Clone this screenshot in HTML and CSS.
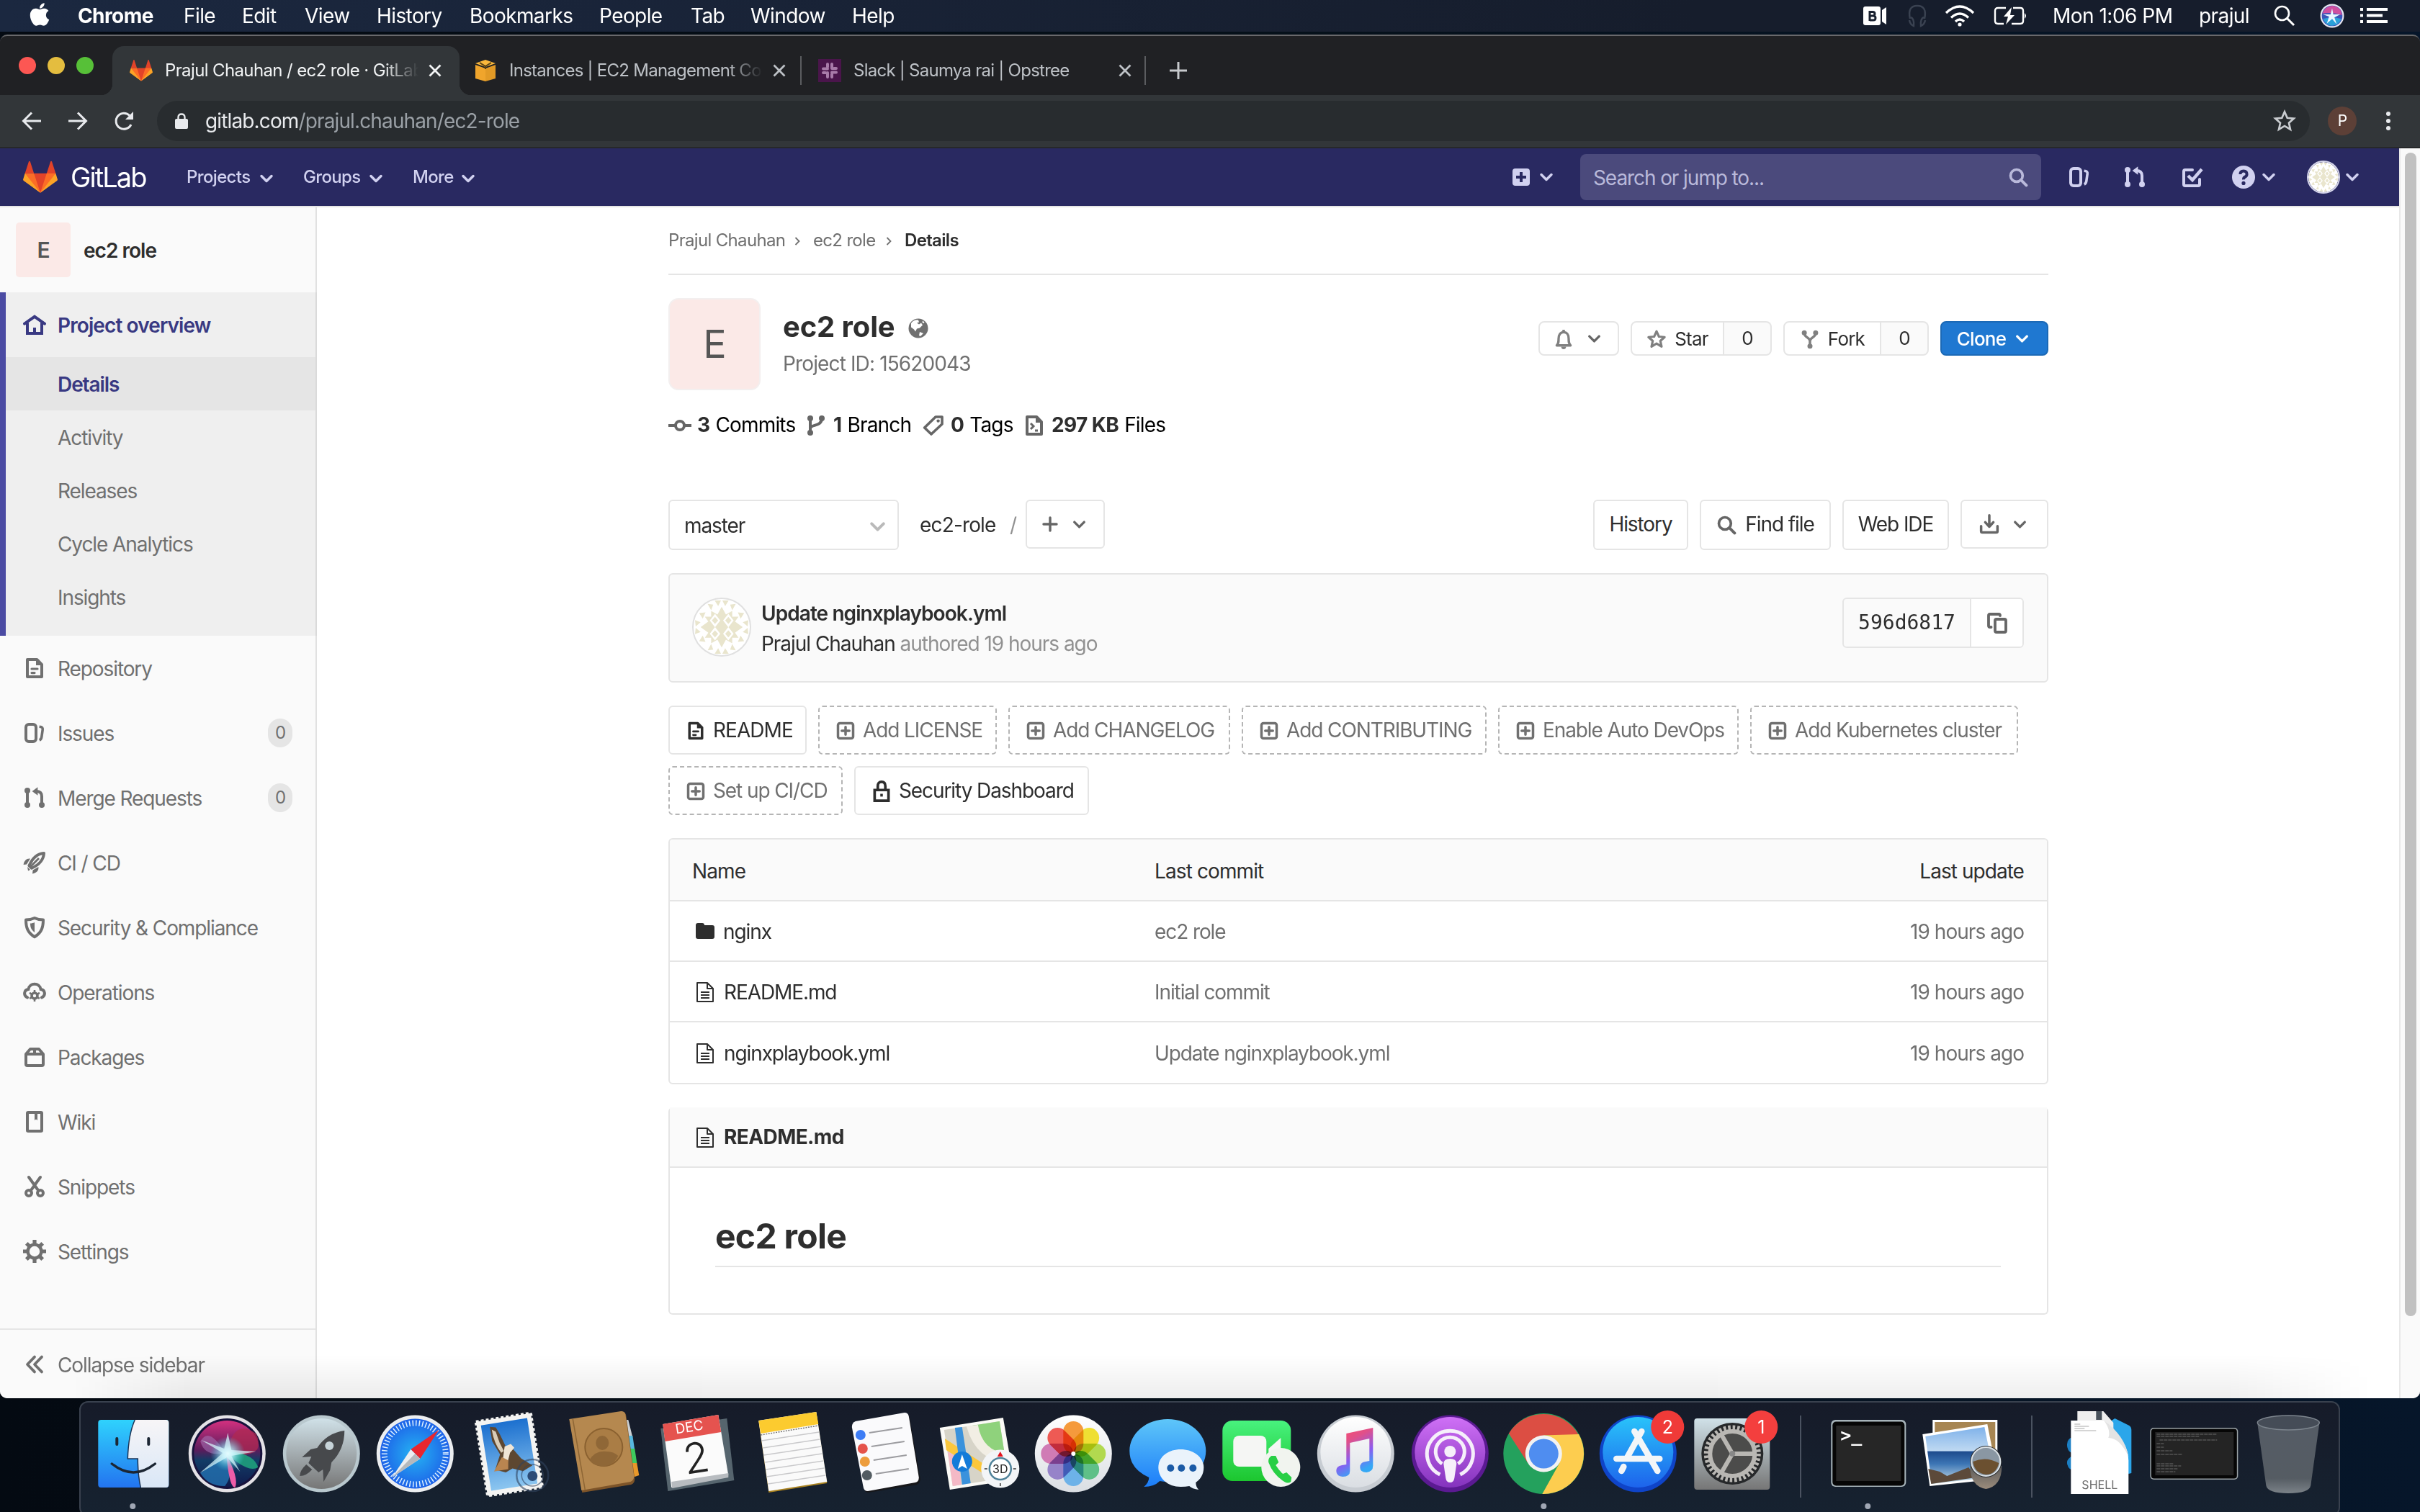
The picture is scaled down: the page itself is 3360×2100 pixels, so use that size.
FILE: index.html
```html
<!DOCTYPE html>
<html lang="en">
<head>
<meta charset="utf-8">
<title>Prajul Chauhan / ec2 role · GitLab</title>
<link rel="stylesheet" href="styles.css">
</head>
<body>
<svg class="sprite" width="0" height="0" aria-hidden="true">
  <defs>
    <linearGradient id="g-finder" x1="0" y1="0" x2="0" y2="1"><stop offset="0" stop-color="#2fd2fd"/><stop offset="1" stop-color="#2374f0"/></linearGradient>
    <linearGradient id="g-finder2" x1="0" y1="0" x2="0" y2="1"><stop offset="0" stop-color="#f7f5f7"/><stop offset="1" stop-color="#d9e7f7"/></linearGradient>
    <linearGradient id="g-siri" x1="0" y1="0" x2="0" y2="1"><stop offset="0" stop-color="#d3307f"/><stop offset=".45" stop-color="#5a1c5c"/><stop offset=".6" stop-color="#123c66"/><stop offset="1" stop-color="#101a4c"/></linearGradient>
    <radialGradient id="g-siriglow"><stop offset="0" stop-color="#fff"/><stop offset=".3" stop-color="#b9f0fa" stop-opacity=".85"/><stop offset="1" stop-color="#39c7e0" stop-opacity="0"/></radialGradient>
    <linearGradient id="g-grey" x1="0" y1="0" x2="0" y2="1"><stop offset="0" stop-color="#d0e1e8"/><stop offset="1" stop-color="#767676"/></linearGradient>
    <radialGradient id="g-safari"><stop offset="0" stop-color="#25b4f3"/><stop offset="1" stop-color="#1d62e8"/></radialGradient>
    <linearGradient id="g-sky" x1="0" y1="0" x2="0" y2="1"><stop offset="0" stop-color="#1c70cf"/><stop offset="1" stop-color="#8cc6f0"/></linearGradient>
    <linearGradient id="g-white" x1="0" y1="0" x2="0" y2="1"><stop offset="0" stop-color="#fff"/><stop offset="1" stop-color="#dadee3"/></linearGradient>
    <linearGradient id="g-msg" x1="0" y1="0" x2="0" y2="1"><stop offset="0" stop-color="#5ec6f9"/><stop offset="1" stop-color="#1c7df9"/></linearGradient>
    <linearGradient id="g-ft" x1="0" y1="0" x2="0" y2="1"><stop offset="0" stop-color="#48f27e"/><stop offset="1" stop-color="#1cc62f"/></linearGradient>
    <linearGradient id="g-note" x1="0" y1="0" x2=".4" y2="1"><stop offset="0" stop-color="#ff4b66"/><stop offset=".35" stop-color="#e0508a"/><stop offset=".7" stop-color="#8a5cf0"/><stop offset="1" stop-color="#35a8f5"/></linearGradient>
    <linearGradient id="g-pod" x1="0" y1="0" x2="0" y2="1"><stop offset="0" stop-color="#cf70f6"/><stop offset="1" stop-color="#8433bd"/></linearGradient>
    <linearGradient id="g-store" x1="0" y1="0" x2="0" y2="1"><stop offset="0" stop-color="#29c3fa"/><stop offset="1" stop-color="#1d63ec"/></linearGradient>
    <linearGradient id="g-trash" x1="0" y1="0" x2="0" y2="1"><stop offset="0" stop-color="#555c66"/><stop offset=".8" stop-color="#555c63"/><stop offset="1" stop-color="#7b8288"/></linearGradient>
    <linearGradient id="g-sea" x1="0" y1="0" x2="0" y2="1"><stop offset="0" stop-color="#7fb2ea"/><stop offset=".42" stop-color="#bfd9f2"/><stop offset=".43" stop-color="#1d4a8c"/><stop offset=".65" stop-color="#3d76b5"/><stop offset="1" stop-color="#cfe3ea"/></linearGradient>
    <linearGradient id="g-lens" x1="0" y1="0" x2="0" y2="1"><stop offset="0" stop-color="#5a5a5a"/><stop offset="1" stop-color="#9b8c7c"/></linearGradient>
  </defs>
  <symbol id="tanuki" viewBox="0 0 36 36">
    <path fill="#e24329" d="M2 14l9.38 9v-9l-4-12.28c-.205-.632-1.176-.632-1.38 0zM34 14l-9.38 9v-9l4-12.28c.205-.632 1.176-.632 1.38 0zM18 34.38 3 14h30z"/>
    <path fill="#fc6d26" d="M18 34.38 11.38 14H2l4 11zM18 34.38 24.62 14H34l-4 11z"/>
    <path fill="#fca326" d="M2 14 .1 20.16c-.18.565 0 1.2.5 1.56l17.42 12.66zM34 14l1.9 6.16c.18.565 0 1.2-.5 1.56L18 34.38z"/>
  </symbol>
  <symbol id="chev" viewBox="0 0 16 16"><path d="M4 6l4 4 4-4" fill="none" stroke="currentColor" stroke-width="2" stroke-linecap="round" stroke-linejoin="round"/></symbol>
  <symbol id="close" viewBox="0 0 16 16"><path d="M2 2l12 12M14 2L2 14" fill="none" stroke="currentColor" stroke-width="2.2"/></symbol>
  <symbol id="home" viewBox="0 0 16 16"><path d="M1 7.3 8 2.4l7 4.9M3 7v7h10V7" fill="none" stroke="currentColor" stroke-width="2" stroke-linecap="round"/><path d="M7 10h2v4H7z" fill="currentColor"/></symbol>
  <symbol id="doc" viewBox="0 0 16 16"><path d="M3 2h6.6L13 5.4V14H3z" fill="none" stroke="currentColor" stroke-width="2" stroke-linejoin="round"/><path d="M9 2v4h4z" fill="currentColor"/><path d="M6 8.5h4M6 11.3h2" stroke="currentColor" stroke-width="1.6" stroke-linecap="round"/></symbol>
  <symbol id="issues" viewBox="0 0 16 16"><rect x="2" y="2" width="7" height="12" rx="2" fill="none" stroke="currentColor" stroke-width="2"/><path d="M11.3 3.6c2 .2 2.5.7 2.3 2.2l-.7 5c-.2 1.3-.5 1.8-1.5 2.3" fill="none" stroke="currentColor" stroke-width="1.8"/></symbol>
  <symbol id="mr" viewBox="0 0 16 16"><g fill="currentColor"><circle cx="3" cy="3" r="2"/><circle cx="3" cy="13" r="2"/><circle cx="13" cy="13" r="2"/><path d="M6.300 3.500 10.200.6v5.800z"/></g><path d="M3 3v10M13 13V7q0-3.500-4-3.500" fill="none" stroke="currentColor" stroke-width="2"/></symbol>
  <symbol id="rocket" viewBox="0 0 16 16"><path d="M14.500 1.500C9.500 1.800 6.500 5 4.200 10.200L6 11.900c5-2.300 8.200-5.400 8.500-10.400z" fill="none" stroke="currentColor" stroke-width="2" stroke-linejoin="round"/><path d="M11 5 5.500 10.500" stroke="currentColor" stroke-width="1.400"/><path d="M5 5.300C2.500 5 .8 6.500.3 9.500l2.200-.3zM10.700 11c.3 2.500-1.200 4.200-4.200 4.700l.3-2.500zM3 11l2 2-1.500.8z" fill="currentColor"/></symbol>
  <symbol id="shield" viewBox="0 0 16 16"><path d="M8 1.500c2 1 3.800 1.300 6 1.300 0 5-1 8.800-6 11.800-5-3-6-6.800-6-11.800 2.200 0 4-.3 6-1.300z" fill="none" stroke="currentColor" stroke-width="2" stroke-linejoin="round"/><path d="M8 4.500v7C6 10 5 8.500 5 5.300 6.200 5.200 7 5 8 4.500z" fill="currentColor"/></symbol>
  <symbol id="ops" viewBox="0 0 16 16"><path d="M3 11.700C.3 10.500.3 6.600 3.700 6 4.500 1.200 11.500 1.200 12.300 6c3.400.6 3.400 4.500.7 5.700" fill="none" stroke="currentColor" stroke-width="2" stroke-linecap="round"/><circle cx="8" cy="10.500" r="2" fill="none" stroke="currentColor" stroke-width="1.800"/><path d="M8 6.500v8M4.500 8.500l7 4M11.500 8.500l-7 4" stroke="currentColor" stroke-width="1.300" stroke-dasharray="1.600 4.800"/></symbol>
  <symbol id="package" viewBox="0 0 16 16"><path d="M2 6h12v7q0 1-1 1H3q-1 0-1-1zM2 6l3-3.500h6L14 6M8 2.500V6" fill="none" stroke="currentColor" stroke-width="2" stroke-linejoin="round"/></symbol>
  <symbol id="book" viewBox="0 0 16 16"><rect x="3" y="1.500" width="10" height="13" rx=".6" fill="none" stroke="currentColor" stroke-width="2"/><path d="M8 2h2v5L9 6.300 8 7z" fill="currentColor"/></symbol>
  <symbol id="snip" viewBox="0 0 16 16"><g fill="none" stroke="currentColor" stroke-width="2" stroke-linecap="round"><circle cx="4" cy="12.500" r="2"/><circle cx="12" cy="12.500" r="2"/><path d="M4 1.500 10.800 11M12 1.500 5.200 11"/></g></symbol>
  <symbol id="gear" viewBox="0 0 16 16"><circle cx="8" cy="8" r="4.700" fill="none" stroke="currentColor" stroke-width="2.200"/><path d="M8 0v3M8 13v3M0 8h3M13 8h3M2.400 2.400l2 2M11.600 11.600l2 2M13.600 2.400l-2 2M4.400 11.600l-2 2" stroke="currentColor" stroke-width="2.600"/></symbol>
  <symbol id="collapse" viewBox="0 0 16 16"><path d="M8 2.800 3 8l5 5.200M13 2.800 8 8l5 5.200" fill="none" stroke="currentColor" stroke-width="1.900" stroke-linecap="round" stroke-linejoin="round"/></symbol>
  <symbol id="commit" viewBox="0 0 16 16"><circle cx="8" cy="8" r="3" fill="none" stroke="currentColor" stroke-width="2"/><path d="M0 8h5M11 8h5" stroke="currentColor" stroke-width="2"/></symbol>
  <symbol id="branch" viewBox="0 0 16 16"><g fill="currentColor"><circle cx="4" cy="3" r="2"/><circle cx="4" cy="13" r="2"/><circle cx="12" cy="3" r="2"/></g><path d="M4 3v10M4 10c0-3 8-1 8-7" fill="none" stroke="currentColor" stroke-width="2"/></symbol>
  <symbol id="tag" viewBox="0 0 16 16"><path d="M9.500 2H14v5l-7.500 7L1.800 9.500z" fill="none" stroke="currentColor" stroke-width="1.800" stroke-linejoin="round"/><circle cx="11.300" cy="4.800" r="1.100" fill="currentColor"/></symbol>
  <symbol id="code" viewBox="0 0 16 16"><path d="M3 2h6.600L13 5.400V14H3z" fill="none" stroke="currentColor" stroke-width="2" stroke-linejoin="round"/><path d="M9 2v4h4z" fill="currentColor"/><path d="M5.500 6.500 7.500 8.500 5.500 10.500M8.500 11.500h2" fill="none" stroke="currentColor" stroke-width="1.500"/></symbol>
  <symbol id="bell" viewBox="0 0 16 16"><path d="M2.500 13c1.500-1.500 1.500-3 1.500-5.500C4 4.500 5.500 2.500 8 2.500s4 2 4 5c0 2.500 0 4 1.500 5.500z" fill="none" stroke="currentColor" stroke-width="1.900" stroke-linejoin="round"/><path d="M6 14h4q-.3 2-2 2t-2-2zM7 .5h2v2H7z" fill="currentColor"/></symbol>
  <symbol id="star" viewBox="0 0 16 16"><path d="M8 1.800 9.900 6l4.500.4-3.400 3 1 4.500L8 11.500l-4 2.400 1-4.500-3.400-3L6.100 6z" fill="none" stroke="currentColor" stroke-width="1.800" stroke-linejoin="round"/></symbol>
  <symbol id="fork" viewBox="0 0 16 16"><g fill="currentColor"><circle cx="3.500" cy="3" r="2"/><circle cx="12.500" cy="3" r="2"/><circle cx="8" cy="13.500" r="2"/></g><path d="M3.500 3c0 4 4.500 3.500 4.500 6.500V13M12.500 3c0 4-4.500 3.500-4.500 6.500" fill="none" stroke="currentColor" stroke-width="2"/></symbol>
  <symbol id="search" viewBox="0 0 16 16"><circle cx="6.800" cy="6.800" r="4.800" fill="none" stroke="currentColor" stroke-width="2.100"/><path d="M10.500 10.500l4 4" stroke="currentColor" stroke-width="2.300" stroke-linecap="round"/></symbol>
  <symbol id="download" viewBox="0 0 16 16"><path d="M1.500 9.500v4q0 1 1 1h11q1 0 1-1v-4M8 1v9M4.800 6.500 8 10l3.200-3.500" fill="none" stroke="currentColor" stroke-width="2" stroke-linecap="round" stroke-linejoin="round"/></symbol>
  <symbol id="copy" viewBox="0 0 16 16"><rect x="6.500" y="5.500" width="7.500" height="9" rx="1" fill="none" stroke="currentColor" stroke-width="1.900"/><path d="M3.800 11H3q-1 0-1-1V3q0-1 1-1h6q1 0 1 1" fill="none" stroke="currentColor" stroke-width="1.900" stroke-linecap="round"/></symbol>
  <symbol id="plusbox" viewBox="0 0 16 16"><rect x="2" y="2" width="12" height="12" rx="1.500" fill="none" stroke="currentColor" stroke-width="2"/><path d="M8 5v6M5 8h6" stroke="currentColor" stroke-width="2" stroke-linecap="round"/></symbol>
  <symbol id="lock" viewBox="0 0 16 18"><path d="M2.500 8h11v8.500h-11zM5 8V5q0-3.500 3-3.500T11 5v3" fill="none" stroke="currentColor" stroke-width="2.100"/><path d="M7 11h2v2.200H7z" fill="currentColor"/></symbol>
  <symbol id="plus" viewBox="0 0 16 16"><path d="M8 2v12M2 8h12" stroke="currentColor" stroke-width="2.300" stroke-linecap="round"/></symbol>
  <symbol id="filet" viewBox="0 0 24 28"><path d="M1 1h14l8 8v18H1zM15 1v8h8M6 14h12M6 18h12M6 22h12" fill="none" stroke="currentColor" stroke-width="2" stroke-linejoin="round"/></symbol>
  <symbol id="folder" viewBox="0 0 28 24"><path d="M1 4q0-3 3-3h6q3 0 3 3h11q3 0 3 3v13q0 3-3 3H4q-3 0-3-3z" fill="currentColor"/></symbol>
  <symbol id="globe" viewBox="0 0 28 28"><circle cx="14" cy="14" r="13.500" fill="currentColor"/><path d="M4 7Q8 1.500 14 2.500l1 3-3 1 3 2 3-2 2 3-4 4-4 1-2 4-2-3-4-3zM16 19l5 2-4 4-2-1zM20 3.500l2.500 2-1 1.500-2-1z" fill="#fff"/></symbol>
  <symbol id="ident" viewBox="0 0 80 80">
    <circle cx="40" cy="40" r="40" fill="#fff"/>
    <g fill="#e9e5cd">
      <path d="M40 11l6 11 9-5v8h9l-5 7 11 8-11 8 5 7h-9v8l-9-5-6 11-6-11-9 5v-8h-9l5-7-11-8 11-8-5-7h9v-8l9 5z"/>
      <path d="M30 2h9l-4 8zM50 2h-9l4 8zM30 78h9l-4-8zM50 78h-9l4-8zM2 30l8 3-7 6zM78 30l-8 3 7 6zM2 50l8-3-7-6zM78 50l-8-3 7-6zM20 7l8 1-3 8zM60 7l-8 1 3 8zM20 73l8-1-3-8zM60 73l-8-1 3-8zM8 20l9-1-4 9zM72 20l-9-1 4 9zM8 60l9 1-4-9zM72 60l-9 1 4-9z"/>
    </g>
    <path fill="#fff" d="M30.500 21l7.500 9.600-7.500 9.600-7.500-9.600zM49.500 21l7.500 9.600-7.500 9.600-7.500-9.600zM30.500 39.800l7.500 9.600-7.500 9.600-7.500-9.600zM49.500 39.800l7.500 9.600-7.500 9.600-7.500-9.600z"/>
    <path fill="#e9e5cd" d="M30.500 25.500l4.500 5-4.500 5-4.500-5zM49.500 25.500l4.500 5-4.500 5-4.500-5zM30.500 44.500l4.500 5-4.500 5-4.500-5zM49.500 44.500l4.500 5-4.500 5-4.500-5z"/>
  </symbol>
  <symbol id="sirib" viewBox="0 0 32 32"><circle cx="16" cy="16" r="15.500" fill="#e8e8f0"/><circle cx="16" cy="16" r="13.500" fill="#3b55b8"/><path d="M3 13Q8 2 18 3q10 2 11 12-12-4-26-2z" fill="#cf4fa0"/><path d="M4 20q4 9 12 9 9-1 12-9-12-4-24 0z" fill="#2aa0d8"/><path d="M16 6l1.500 8 9 0-7.500 4 3 9-6-7-7 6 3-9-8-3 10 0z" fill="#e9f6ff"/></symbol>
</svg>

<header class="menubar">
  <svg class="apple" viewBox="0 0 384 512"><path fill="#fff" d="M318.700 268.700c-.2-36.700 16.400-64.400 50-84.800-18.800-26.900-47.200-41.700-84.700-44.600-35.500-2.800-74.300 20.700-88.500 20.700-15 0-49.400-19.700-76.400-19.700C63.300 141.200 4 184.800 4 273.500q0 39.300 14.400 81.200c12.800 36.700 59 126.700 107.200 125.200 25.200-.6 43-17.900 75.800-17.900 31.800 0 48.300 17.900 76.400 17.900 48.600-.7 90.400-82.500 102.600-119.300-65.200-30.700-61.700-90-61.700-91.900zm-56.600-164.200c27.300-32.400 24.800-61.900 24-72.500-24.100 1.400-52 16.400-67.900 34.900-17.500 19.800-27.800 44.300-25.600 71.900 26.100 2 49.900-11.400 69.500-34.300z"/></svg>
  <nav class="menus">
    <b class="m1">Chrome</b><span class="m2">File</span><span class="m3">Edit</span><span class="m4">View</span><span class="m5">History</span><span class="m6">Bookmarks</span><span class="m7">People</span><span class="m8">Tab</span><span class="m9">Window</span><span>Help</span>
  </nav>
  <div class="status">
    <svg class="st-b" viewBox="0 0 32 26"><rect width="24" height="26" rx="3" fill="#fff"/><path d="M26 5l6-4v24l-6-4z" fill="#fff"/><path d="M9 6v14M9 7.500h4q3 0 3 2.700T13 13H9h5q3 0 3 3t-3 3H9" fill="none" stroke="#18202f" stroke-width="3"/></svg>
    <svg class="st-h" viewBox="0 0 28 32"><path d="M4 20Q0 2 14 2t10 18M5 18q5 2 4 12-5-2-6-8M23 18q-5 2-4 12 5-2 6-8" fill="none" stroke="#3a4251" stroke-width="2.500"/></svg>
    <svg class="st-w" viewBox="0 0 42 30"><path d="M2 11Q21-7 40 11M9 17.500q12-11 24 0M15 23q6-6 12 0" fill="none" stroke="#fff" stroke-width="3.400"/><circle cx="21" cy="27" r="2.600" fill="#fff"/></svg>
    <svg class="st-p" viewBox="0 0 46 26"><path d="M17 2H6Q2 2 2 6v14q0 4 4 4h8M27 2h10q4 0 4 4v14q0 4-4 4H25" fill="none" stroke="#fff" stroke-width="2.400"/><path d="M25 1 14 14h6l-3 11 12-13h-6zM43 9q4 4 0 8z" fill="#fff"/></svg>
    <span class="clock">Mon 1:06 PM</span>
    <span class="user">prajul</span>
    <svg class="st-s" viewBox="0 0 30 30"><circle cx="11.500" cy="11.500" r="9.500" fill="none" stroke="#fff" stroke-width="2.600"/><path d="M18.500 18.500l9.500 9.500" stroke="#fff" stroke-width="3"/></svg>
    <svg class="st-i"><use href="#sirib"/></svg>
    <svg class="st-l" viewBox="0 0 38 22"><path d="M0 2h4M9 2h29M0 10.500h4M9 10.500h22M0 19h4M9 19h29" stroke="#fff" stroke-width="4"/></svg>
  </div>
</header>

<main class="window">
  <div class="tabstrip">
    <div class="lights"><i class="red"></i><i class="yellow"></i><i class="green"></i></div>
    <div class="tab active"><svg class="fav"><use href="#tanuki"/></svg><span class="title">Prajul Chauhan / ec2 role · GitLab</span><svg class="x"><use href="#close"/></svg></div>
    <div class="tab t2"><svg class="fav" viewBox="0 0 32 32"><path d="M2 8l14 5v18L2 27z" fill="#f0a52c"/><path d="M30 8l-14 5v18l14-4z" fill="#e29a26"/><path d="M2 6l14-5 14 5-14 5z" fill="#fbb83c"/><path d="M8 5l8 5 8-5M16 10v4" fill="none" stroke="#5b4314" stroke-width="2"/></svg><span class="title">Instances | EC2 Management Co</span><svg class="x"><use href="#close"/></svg></div>
    <div class="tab t3"><svg class="fav" viewBox="0 0 32 32"><rect width="32" height="32" fill="#4a154b"/><g stroke="#a87ba9" stroke-width="4" stroke-linecap="round"><path d="M13 11V7M7 13.500h6M19 7v6M25 13h-3M13 25v-6M7 19h3M19 21v4M19 18.500h6"/></g></svg><span class="title">Slack | Saumya rai | Opstree</span><svg class="x"><use href="#close"/></svg></div>
    <svg class="newtab" viewBox="0 0 24 24"><path d="M12 0v24M0 12h24" stroke="#c6c9cc" stroke-width="3"/></svg>
  </div>
  <div class="toolbar">
    <svg class="tb" viewBox="0 0 28 28"><path d="M27 14H3M14 2.500 2.500 14 14 25.500" fill="none" stroke="#e8eaed" stroke-width="3"/></svg>
    <svg class="tb" viewBox="0 0 28 28"><path d="M1 14h24M14 2.500 25.500 14 14 25.500" fill="none" stroke="#e8eaed" stroke-width="3"/></svg>
    <svg class="tb" viewBox="0 0 28 28"><path d="M24 19A11 11 0 1 1 22 6.500" fill="none" stroke="#e8eaed" stroke-width="3"/><path d="M27 1v11H16z" fill="#e8eaed"/></svg>
    <div class="omnibox">
      <svg class="padlock" viewBox="0 0 18 22"><rect x="0" y="8" width="18" height="14" rx="2" fill="#e8eaed"/><path d="M4.500 9V6q0-4.500 4.500-4.500T13.500 6v3" fill="none" stroke="#e8eaed" stroke-width="2.400"/></svg>
      <span class="url"><b>gitlab.com</b>/prajul.chauhan/ec2-role</span>
      <svg class="bm" viewBox="0 0 30 30"><path d="M15 3l3.500 8 8.500.8-6.400 5.700 1.900 8.500-7.500-4.500L7.500 26l1.900-8.500L3 11.800l8.500-.8z" fill="none" stroke="#c9ccd0" stroke-width="2.500"/></svg>
    </div>
    <span class="profile">P</span>
    <svg class="dots" viewBox="0 0 6 26"><g fill="#e8eaed"><circle cx="3" cy="3" r="3"/><circle cx="3" cy="13" r="3"/><circle cx="3" cy="23" r="3"/></g></svg>
  </div>

  <div class="viewport">
   <div class="page">
    <div class="navbar">
      <svg class="logo"><use href="#tanuki"/></svg><span class="brand">GitLab</span>
      <span class="nv n1">Projects<svg><use href="#chev"/></svg></span><span class="nv n2">Groups<svg><use href="#chev"/></svg></span><span class="nv n3">More<svg><use href="#chev"/></svg></span>
      <div class="navright">
        <svg class="np" viewBox="0 0 24 24"><rect width="24" height="24" rx="4" fill="#d1d1f0"/><path d="M12 5v14M5 12h14" stroke="#292961" stroke-width="4"/></svg><svg class="nc"><use href="#chev"/></svg>
        <div class="search"><span>Search or jump to...</span><svg><use href="#search"/></svg></div>
        <svg class="ni i1"><use href="#issues"/></svg><svg class="ni i2"><use href="#mr"/></svg>
        <svg class="ni i3" viewBox="0 0 16 16"><path d="M13 9.500V13q0 1-1 1H3q-1 0-1-1V4q0-1 1-1h5" fill="none" stroke="currentColor" stroke-width="2" stroke-linecap="round"/><path d="M5 7l3 3 6.500-7.500" fill="none" stroke="currentColor" stroke-width="2.200"/></svg>
        <svg class="ni i4" viewBox="0 0 16 16"><circle cx="8" cy="8" r="8" fill="currentColor"/><path d="M5.700 6q0-2.300 2.300-2.300T10.300 6q0 1.200-1.200 1.800T8 9.700" fill="none" stroke="#292961" stroke-width="2"/><circle cx="8" cy="12.200" r="1.300" fill="#292961"/></svg><svg class="nc"><use href="#chev"/></svg>
        <svg class="nava"><use href="#ident"/></svg><svg class="nc"><use href="#chev"/></svg>
      </div>
    </div>
    <div class="body">
      <aside class="sidebar">
        <div class="ctx"><span class="av">E</span><b>ec2 role</b></div>
        <div class="group">
          <div class="item on"><svg><use href="#home"/></svg><span>Project overview</span></div>
          <div class="sub on">Details</div><div class="sub">Activity</div><div class="sub">Releases</div><div class="sub">Cycle Analytics</div><div class="sub">Insights</div>
        </div>
        <div class="item"><svg><use href="#doc"/></svg><span>Repository</span></div>
        <div class="item"><svg><use href="#issues"/></svg><span>Issues</span><em>0</em></div>
        <div class="item"><svg><use href="#mr"/></svg><span>Merge Requests</span><em>0</em></div>
        <div class="item"><svg><use href="#rocket"/></svg><span>CI / CD</span></div>
        <div class="item"><svg><use href="#shield"/></svg><span>Security &amp; Compliance</span></div>
        <div class="item"><svg><use href="#ops"/></svg><span>Operations</span></div>
        <div class="item"><svg><use href="#package"/></svg><span>Packages</span></div>
        <div class="item"><svg><use href="#book"/></svg><span>Wiki</span></div>
        <div class="item"><svg><use href="#snip"/></svg><span>Snippets</span></div>
        <div class="item"><svg><use href="#gear"/></svg><span>Settings</span></div>
        <div class="item fold"><svg><use href="#collapse"/></svg><span>Collapse sidebar</span></div>
      </aside>

      <section class="content">
        <div class="crumbs"><span class="c1">Prajul Chauhan</span><svg viewBox="0 0 8 12"><path d="M1.500 1l5 5-5 5" fill="none" stroke="currentColor" stroke-width="1.800"/></svg><span class="c2">ec2 role</span><svg viewBox="0 0 8 12"><path d="M1.500 1l5 5-5 5" fill="none" stroke="currentColor" stroke-width="1.800"/></svg><b>Details</b></div>
        <div class="project">
          <span class="pav">E</span>
          <div class="ptext"><h1>ec2 role <svg><use href="#globe"/></svg></h1><p>Project ID: 15620043</p></div>
          <div class="pbtns">
            <span class="btn sm w112"><svg class="s28 lt"><use href="#bell"/></svg><svg class="cv"><use href="#chev"/></svg></span>
            <span class="pair"><span class="btn sm w130"><svg class="s28 lt"><use href="#star"/></svg>Star</span><span class="count">0</span></span>
            <span class="pair"><span class="btn sm w136"><svg class="s28 lt"><use href="#fork"/></svg>Fork</span><span class="count">0</span></span>
            <span class="btn sm blue">Clone<svg class="cv"><use href="#chev"/></svg></span>
          </div>
        </div>
        <div class="stats">
          <span class="s1"><svg><use href="#commit"/></svg><b>3</b> Commits</span><span class="s2"><svg><use href="#branch"/></svg><b>1</b> Branch</span><span class="s3"><svg><use href="#tag"/></svg><b>0</b> Tags</span><span class="s4"><svg><use href="#code"/></svg><b>297 KB</b> Files</span>
        </div>
        <div class="tree">
          <span class="btn select"><span>master</span><svg><use href="#chev"/></svg></span>
          <span class="path">ec2-role</span><span class="slash">/</span>
          <span class="btn h68 w110"><svg class="s24"><use href="#plus"/></svg><svg class="cv"><use href="#chev"/></svg></span>
          <span class="btn w132 push">History</span><span class="btn w182"><svg class="s28"><use href="#search"/></svg>Find file</span><span class="btn w148">Web IDE</span><span class="btn h68 w122"><svg class="s28"><use href="#download"/></svg><svg class="cv"><use href="#chev"/></svg></span>
        </div>
        <div class="commit">
          <svg class="cav"><use href="#ident"/></svg>
          <div class="ctext"><b>Update nginxplaybook.yml</b><p>Prajul Chauhan <i>authored 19 hours ago</i></p></div>
          <span class="sha"><code>596d6817</code><span class="cp"><svg><use href="#copy"/></svg></span></span>
        </div>
        <div class="quick">
          <span class="qb solid q1"><svg><use href="#doc"/></svg>README</span><span class="qb q2"><svg><use href="#plusbox"/></svg>Add LICENSE</span><span class="qb q3"><svg><use href="#plusbox"/></svg>Add CHANGELOG</span><span class="qb q4"><svg><use href="#plusbox"/></svg>Add CONTRIBUTING</span><span class="qb q5"><svg><use href="#plusbox"/></svg>Enable Auto DevOps</span><span class="qb q6"><svg><use href="#plusbox"/></svg>Add Kubernetes cluster</span><span class="qb q7"><svg><use href="#plusbox"/></svg>Set up CI/CD</span><span class="qb solid q8"><svg class="lk"><use href="#lock"/></svg>Security Dashboard</span>
        </div>
        <div class="files">
          <div class="row head"><span>Name</span><span>Last commit</span><span>Last update</span></div>
          <div class="row"><span><svg class="fo"><use href="#folder"/></svg>nginx</span><span>ec2 role</span><span>19 hours ago</span></div>
          <div class="row"><span><svg class="fi"><use href="#filet"/></svg>README.md</span><span>Initial commit</span><span>19 hours ago</span></div>
          <div class="row"><span><svg class="fi"><use href="#filet"/></svg>nginxplaybook.yml</span><span>Update nginxplaybook.yml</span><span>19 hours ago</span></div>
        </div>
        <div class="readme">
          <div class="rhead"><svg class="fi"><use href="#filet"/></svg><b>README.md</b></div>
          <h2>ec2 role</h2>
        </div>
      </section>
    </div>
   </div>
   <div class="scroll"><i></i></div>
  </div>
</main>

<footer class="dockrow">
 <div class="dock">
  <svg class="app" viewBox="0 0 130 152"><rect x="16" y="26" width="98" height="94" rx="4" fill="url(#g-finder)"/><path d="M67 26h43q4 0 4 4v86q0 4-4 4H75q-4-18-4-40H57q1-34 10-54z" fill="url(#g-finder2)"/><path d="M67 26q-9 20-10 54h14q0 22 4 40" fill="none" stroke="#1a3355" stroke-width="1.500"/><path d="M42 52v8M86 52v8" stroke="#1c2633" stroke-width="4" stroke-linecap="round"/><path d="M35 87q30 24 60 0" fill="none" stroke="#1c2633" stroke-width="3.500" stroke-linecap="round"/><circle cx="64" cy="146" r="4" fill="#a0a7b4"/></svg>
  <svg class="app" viewBox="0 0 130 152"><circle cx="65" cy="73" r="53.500" fill="#e4e2e6"/><circle cx="65" cy="73" r="49" fill="#17123c"/><circle cx="65" cy="73" r="46" fill="url(#g-siri)"/><path d="M65 73q8-50 40-28 6 12 2 22-12 12-42 6z" fill="#b02a52" opacity=".75"/><path d="M62 72Q40 34 28 56q6 22 34 16z" fill="#a877b8" opacity=".55"/><path d="M62 74l-34 26q10 18 34 18 14-18 0-44z" fill="#2478b8" opacity=".75"/><path d="M66 70q36 2 42 22-14 8-42-18z" fill="#1fa07c" opacity=".9"/><path d="M64 74q18 34 12 46-8 0-12-46z" fill="#ee5ca8"/><circle cx="66" cy="73" r="24" fill="url(#g-siriglow)"/><path d="M66 44l5 24 34 2-34 6 12 22-18-20-38 22 32-28-30-18 32 12z" fill="#d8fbff" opacity=".7"/></svg>
  <svg class="app" viewBox="0 0 130 152"><circle cx="65" cy="73" r="53.500" fill="#b9c8ce"/><circle cx="65" cy="73" r="49" fill="url(#g-grey)"/><path d="M97 41q-24 3-38 24l-9 2-12 11 13-1-4 9 14 13 6-4 1 17 9-16 2-11q18-18 18-44z" fill="#47494c"/><circle cx="76" cy="62" r="6" fill="#c6d3d8"/><path d="M44 88q-9 8-9 16 9 0 17-9z" fill="#47494c"/></svg>
  <svg class="app" viewBox="0 0 130 152"><circle cx="65" cy="73" r="53.500" fill="#eceef0"/><circle cx="65" cy="73" r="48.500" fill="url(#g-safari)"/><circle cx="65" cy="73" r="42.500" fill="none" stroke="#dff1ff" stroke-width="8" stroke-dasharray="1.500 3.062"/><path d="M98 40 72 80 59 67z" fill="#e8262f"/><path d="M33 106l26-39 13 13z" fill="#eceef0"/><path d="M33 106l32-33 7 7z" fill="#b5b9bd"/></svg>
  <svg class="app" viewBox="0 0 130 152"><g transform="rotate(-9 65 73)"><rect x="26" y="22" width="77" height="104" fill="#f4f4f2" stroke="#f4f4f2" stroke-width="4" stroke-dasharray="4 3"/><rect x="32" y="28" width="65" height="92" fill="url(#g-sky)"/><path d="M44 32l8 2 4 10 6 20 8 2 10 16 14 12-14 6-14-6-10 4-14-6 10-20-8-20z" fill="#5d4731"/><path d="M46 36l5 4 3 16 4 12-4 2q-8-14-8-34z" fill="#d9cdb8"/><path d="M60 62l9-2 4 6-7 6-6 14-6-4z" fill="#f0e6d6"/><path d="M54 76l-14 18 20 0 2-12z" fill="#b98550"/></g><circle cx="97" cy="103" r="22" fill="none" stroke="#30425d" stroke-opacity=".6" stroke-width="2.500"/><circle cx="97" cy="103" r="15" fill="none" stroke="#30425d" stroke-opacity=".6" stroke-width="1.500"/><circle cx="97" cy="104" r="7" fill="#2c4b76"/></svg>
  <svg class="app" viewBox="0 0 130 152"><path d="M88 26h12l6 24-8 2z" fill="#ccd0d2"/><path d="M96 48h10l3 20-9 2z" fill="#58b9e0"/><path d="M100 66h9l3 20-9 2z" fill="#3ecb5e"/><path d="M102 86h10l3 17-9 3z" fill="#e8982a"/><path d="M20 26 91 15q5 0 6 5l12 88q0 6-5 8l-68 11z" fill="#7d5429"/><path d="M18 25 90 14q5 0 6 4l12 86q0 6-5 8l-68 12z" fill="#b5884f"/><path d="M23 25l17 98" stroke="#8e6635" stroke-width="1.500"/><circle cx="66" cy="64" r="26" fill="#aa7d45" stroke="#8a6130" stroke-width="2"/><ellipse cx="64" cy="58" rx="9" ry="10" fill="#8f6737"/><path d="M46 82q8-14 24-12 10 0 16 6-8 16-24 14-10 0-16-8z" fill="#8f6737"/></svg>
  <svg class="app" viewBox="0 0 130 152"><path d="M14 38l92-14 10 86-92 15z" fill="#56656e"/><path d="M17 32l77-13 14 84-79 17z" fill="#fbfbfb"/><path d="M17 32l77-13 4 24-78 13z" fill="#e5534f"/><path d="M29 112l79-12v6l-78 15z" fill="#b8bcc0"/><g transform="rotate(-9 60 70)"><text x="59" y="42" class="cal1">DEC</text><text x="62" y="100" class="cal2">2</text></g></svg>
  <svg class="app" viewBox="0 0 130 152"><g transform="translate(3)"><path d="M16 28l80-12 15 98-81 13z" fill="#a98220"/><path d="M16 27l80-12 15 97-81 13z" fill="#fafafa"/><path d="M16 27l80-12 3 17-80 13z" fill="#fccb2f"/><path d="M19 47l80-13" stroke="#777" stroke-width="1.500" stroke-dasharray="2 1.500"/><path d="M20 55l80-12M22 65l79-12M23 75l80-12M25 85l79-12M26 95l80-12M27 105l80-12M29 115l80-12" stroke="#c9c9cb" stroke-width="1.500"/></g></svg>
  <svg class="app" viewBox="0 0 130 152"><g transform="translate(4.500)"><path d="M20 31 88 17q5 0 6 5l15 86q0 6-5 8L37 127q-5 0-6-5L15 39q0-6 5-8z" fill="#17171a"/><path d="M19 28 87 16q5 0 6 5l14 85q0 6-5 7l-66 12q-5 0-6-5L14 36q0-6 5-8z" fill="#fafafc"/><circle cx="26" cy="47" r="7" fill="#3e7df5"/><circle cx="29" cy="66" r="7" fill="#e5534b"/><circle cx="32" cy="84" r="7" fill="#ed9d3d"/><circle cx="35" cy="103" r="7" fill="#535c62"/><path d="M38 44l46-7M41 63l46-7M44 82l46-7M47 101l46-7" stroke="#9c9ca0" stroke-width="1.800"/></g></svg>
  <svg class="app" viewBox="0 0 130 152"><g transform="translate(2.500)"><path d="M7 37l88-14 15 86-89 14z" fill="#fbfaf6"/><path d="M13 40l77-12 12 78-77 12z" fill="#d7d4c8"/><path d="M52 34l38-6 10 64-20-8-24-36z" fill="#8fd27c"/><path d="M44 35l16-2q6 36 40 40l2 12Q58 84 44 35z" fill="#f2eee4"/><path d="M14 52l86 56-16 3L16 68z" fill="#fbc73c"/><path d="M28 37l10-1 12 78-12 2z" fill="#3a92dc"/><path d="M18 70l14 8 5 38-12 2z" fill="#f4b9c6"/><circle cx="38" cy="84" r="14" fill="#147bd9"/><path d="M38 74l7 20-7-4-6 4z" fill="#fff"/><circle cx="91" cy="94" r="26.500" fill="#f3f5f7"/><circle cx="91" cy="94" r="15" fill="#fff" stroke="#4f8299" stroke-width="2.500"/><path d="M91 70l4 7h-8z" fill="#e3131d"/><path d="M69 94h4M109 94h4M91 114v4" stroke="#333" stroke-width="1.500"/><text x="91" y="100" class="map">3D</text></g></svg>
  <svg class="app" viewBox="0 0 130 152"><circle cx="65" cy="73" r="53.500" fill="url(#g-white)"/><g class="petals"><rect x="51" y="28" width="28" height="45" rx="14" fill="#f59a3c"/><rect x="51" y="28" width="28" height="45" rx="14" fill="#efdf33" transform="rotate(45 65 73)"/><rect x="51" y="28" width="28" height="45" rx="14" fill="#b2d94f" transform="rotate(90 65 73)"/><rect x="51" y="28" width="28" height="45" rx="14" fill="#5fc088" transform="rotate(135 65 73)"/><rect x="51" y="28" width="28" height="45" rx="14" fill="#6db2e8" transform="rotate(180 65 73)"/><rect x="51" y="28" width="28" height="45" rx="14" fill="#9683c9" transform="rotate(225 65 73)"/><rect x="51" y="28" width="28" height="45" rx="14" fill="#d07bb5" transform="rotate(270 65 73)"/><rect x="51" y="28" width="28" height="45" rx="14" fill="#ee5a54" transform="rotate(315 65 73)"/></g><circle cx="65" cy="73" r="3" fill="#fff"/></svg>
  <svg class="app" viewBox="0 0 130 152"><path d="M65 25c30 0 53 20 53 44s-20 43-53 43q-6 0-11-1-8 8-22 8 7-6 7-13-27-12-27-37c0-24 23-44 53-44z" fill="url(#g-msg)"/><path d="M83 67c18 0 32 11 32 25 0 10-5 17-11 21q0 6 4 10-9-1-13-5-5 1-12 1c-18 0-31-12-31-27 0-14 13-25 31-25z" fill="#eaf3fb"/><circle cx="69" cy="93" r="5" fill="#1b5ba6"/><circle cx="84" cy="93" r="5" fill="#1b5ba6"/><circle cx="100" cy="93" r="5" fill="#1b5ba6"/></svg>
  <svg class="app" viewBox="0 0 130 152"><rect x="10" y="27" width="95" height="84" rx="14" fill="url(#g-ft)"/><rect x="25" y="48" width="46" height="43" rx="8" fill="#f5f6f4"/><path d="M74 66l17-15v36L74 76z" fill="#f5f6f4"/><circle cx="91" cy="92" r="27" fill="#f1f4ef"/><path d="M78 76l6 0 4 9-4 4q5 8 10 12l5-2 7 7-1 6q-4 3-9 0-16-10-22-27-1-6 4-9z" fill="#28cf45"/></svg>
  <svg class="app" viewBox="0 0 130 152"><circle cx="65" cy="73" r="53.500" fill="#c7ccd2"/><circle cx="65" cy="71" r="49" fill="url(#g-white)"/><path d="M52 45l37-8v53q0 8-9 9-9 0-9-7 0-7 8-8l5-1V52l-27 6v39q0 8-10 8-9-1-9-8 0-7 8-8l6-1z" fill="url(#g-note)"/></svg>
  <svg class="app" viewBox="0 0 130 152"><circle cx="65" cy="73" r="53.500" fill="#5b1a92"/><circle cx="65" cy="71" r="49" fill="url(#g-pod)"/><g fill="none" stroke="#f6effa" stroke-width="5"><path d="M51 102A32 32 0 1 1 79 102"/><path d="M54 87A20 20 0 1 1 76 87"/></g><circle cx="65" cy="70" r="8" fill="#f6effa"/><path d="M56 87q0-7 9-7t9 7l-3 20q-1 6-6 6t-6-6z" fill="#f6effa"/></svg>
  <svg class="app" viewBox="0 0 130 152"><circle cx="65" cy="73" r="56" fill="#24a15d"/><path d="M16.500 45A56 56 0 0 1 113.500 47L65 47.500 43 86z" fill="#dc4e43"/><path d="M113.800 46A56 56 0 0 1 63 129L87 86 65 47.500z" fill="#fdcd4f"/><circle cx="65" cy="73" r="25.500" fill="#f2f2f2"/><circle cx="65" cy="73" r="20.500" fill="#4f8df0"/><circle cx="65" cy="146" r="4" fill="#a0a7b4"/></svg>
  <svg class="app" viewBox="0 0 130 152"><circle cx="65" cy="73" r="53.500" fill="#0f44c8"/><circle cx="65" cy="71" r="49" fill="url(#g-store)"/><g stroke="#f3f6f8" stroke-width="8.500" stroke-linecap="round"><path d="M70 42 50 78M60 42l32 55M35 80h60M45 91l-3 6"/></g><circle cx="106" cy="36" r="23" fill="#f03a38"/><text x="106" y="45" class="bdg">2</text></svg>
  <svg class="app" viewBox="0 0 130 152"><rect x="12" y="24" width="105" height="99" rx="4" fill="url(#g-grey)"/><circle cx="65" cy="73" r="43" fill="#26282a"/><circle cx="65" cy="73" r="36" fill="none" stroke="#b9b7b3" stroke-width="7" stroke-dasharray="3.500 2.785"/><circle cx="65" cy="73" r="31" fill="#4c4c4b" stroke="#b9b7b3" stroke-width="6"/><path d="M65 73h30M65 73 50 47M65 73 50 99" stroke="#b9b7b3" stroke-width="6"/><circle cx="65" cy="73" r="4" fill="#888"/><circle cx="105" cy="36" r="23" fill="#f43f3e"/><text x="105" y="45" class="bdg">1</text></svg>
  <i class="sep"></i>
  <svg class="app" viewBox="0 0 130 152"><rect x="12" y="26" width="104" height="93" rx="6" fill="#a7b4ba"/><rect x="14" y="28.500" width="100" height="89" rx="5" fill="#060606"/><rect x="19" y="34" width="90" height="77" fill="#262626"/><text x="25" y="56" class="term">&gt;_</text><circle cx="63" cy="146" r="4" fill="#a0a7b4"/></svg>
  <svg class="app" viewBox="0 0 130 152"><path d="M22 26h90v60H22z" fill="#fff"/><path d="M25 29h84v54H25z" fill="#a78653"/><path d="M8 46l90-14 15 76-95 10z" fill="#fff"/><path d="M12 49l82-13 14 69-87 10z" fill="url(#g-sea)"/><path d="M16 94l16 4 10 6 30-12 10 14-62 9z" fill="#5c4a3a"/><path d="M74 90q0 28 22 32 22-4 22-32z" fill="url(#g-lens)"/><circle cx="96" cy="84" r="22" fill="#2b2e31"/><circle cx="96" cy="84" r="20" fill="#8a97a3" stroke="#dce3e8" stroke-width="2"/><path d="M78 84q18-8 36 2-4 16-18 16-16-2-18-18z" fill="#6b5030"/></svg>
  <i class="sep"></i>
  <svg class="app" viewBox="0 0 130 152"><g transform="translate(7)"><path d="M20 50q-10 2-8 14 2 8 8 8v4q-10 4-8 12 2 8 10 8z" fill="#1b7fc4"/><path d="M72 28l6-4 20 10q3 2 3 6v60l-4 1z" fill="#2ba6ea"/><path d="M26 14h36l14 16v20H26z" fill="#eee"/><path d="M52 14h8v12h-8z" fill="#47505a"/><path d="M17 27h46q34 28 34 56v46H17z" fill="#fff"/><path d="M63 27q10 14 6 24 16 0 28 26Q92 48 63 27z" fill="#e3e3e3"/><path d="M22 32h8M22 35h20M22 38h14M22 41h30" stroke="#aaa" stroke-width="1"/><text x="57" y="122" class="shell">SHELL</text></g></svg>
  <svg class="app" viewBox="0 0 130 152"><rect x="3" y="37" width="122" height="72" rx="5" fill="#9aa2a6"/><rect x="4.500" y="38.500" width="119" height="69" rx="4" fill="#060606"/><rect x="10" y="43" width="109" height="60" fill="#242424"/><path d="M12 46h84M12 49h60M16 54h80M12 59h10M12 64h10M12 69h22M12 74h36M12 87h24M12 90h34M12 94h30M12 98h26" stroke="#6a6a6a" stroke-width="1.200" stroke-dasharray="5 1"/></svg>
  <svg class="app" viewBox="0 0 130 152"><path d="M21 31q43-14 86 0l-12 86q-2 11-31 11t-31-11z" fill="url(#g-trash)"/><ellipse cx="64" cy="30" rx="43" ry="10" fill="#454c57" stroke="#7d858e" stroke-width="1.500"/></svg>
 </div>
</footer>
</body>
</html>
```
FILE: styles.css
```css
* { box-sizing: border-box; margin: 0; padding: 0; }
body { width: 3360px; height: 2100px; overflow: hidden; display: flex; flex-direction: column; background: linear-gradient(90deg, #040a12, #051019 50%, #06162a); font-family: Inter, "Liberation Sans", sans-serif; font-size: 28px; letter-spacing: -0.039em; color: #2e2e2e; line-height: 1.2; }
svg { display: block; flex: none; }
.sprite { position: absolute; }

/* macOS menu bar */
.menubar { height: 44px; margin-bottom: 4px; flex: none; display: flex; align-items: center; background: linear-gradient(90deg, #1b2840, #161d2c 70%); color: #fff; letter-spacing: -0.021em; }
.apple { width: 28px; height: 36px; margin-left: 41px; margin-top: -5px; }
.menus { display: flex; margin-left: 39px; padding-top: 2px; white-space: nowrap; }
.menus b { font-weight: 700; }
.m1 { width: 147px; } .m2 { width: 81px; } .m3 { width: 87px; } .m4 { width: 100px; } .m5 { width: 129px; } .m6 { width: 180px; } .m7 { width: 127px; } .m8 { width: 83px; } .m9 { width: 141px; }
.status { margin-left: auto; margin-right: 45px; display: flex; align-items: center; white-space: nowrap; }
.st-b { width: 32px; height: 26px; margin-right: 29px; }
.st-h { width: 28px; height: 32px; margin-right: 24px; }
.st-w { width: 42px; height: 30px; margin-right: 26px; }
.st-p { width: 46px; height: 26px; margin-right: 36px; }
.clock { width: 203px; padding-top: 2px; letter-spacing: -0.018em; }
.user { width: 104px; padding-top: 2px; }
.st-s { width: 30px; height: 30px; margin-right: 34px; }
.st-i { width: 34px; height: 34px; margin-right: 22px; }
.st-l { width: 38px; height: 22px; }

/* Browser window */
.window { height: 1894px; flex: none; display: flex; flex-direction: column; overflow: hidden; border-radius: 10px; border-top: 2px solid #69696c; background: #202124; }
.tabstrip { height: 82px; flex: none; display: flex; padding-top: 14px; font-size: 24px; letter-spacing: -0.031em; color: #bdc1c6; }
.lights { display: flex; gap: 16px; width: 156px; padding: 15px 0 0 26px; flex: none; }
.lights i { width: 24px; height: 24px; border-radius: 50%; }
.red { background: #fc5753; } .yellow { background: #e4bd3f; } .green { background: #57c038; }
.tab { display: flex; align-items: center; height: 68px; padding-left: 24px; flex: none; }
.tab .fav { width: 32px; height: 32px; margin-right: 17px; }
.tab .title { width: 352px; overflow: hidden; white-space: nowrap; -webkit-mask: linear-gradient(90deg, #000 86%, transparent 100%); }
.tab .x { width: 20px; height: 20px; margin-left: 13px; }
.active { width: 482px; background: #323639; color: #f1f3f4; border-radius: 16px 16px 0 0; position: relative; }
.active .title { letter-spacing: -0.026em; }
.active::before, .active::after { content: ""; position: absolute; bottom: 0; width: 16px; height: 16px; }
.active::before { left: -16px; background: radial-gradient(circle at 0 0, transparent 16px, #323639 16.500px); }
.active::after { right: -16px; background: radial-gradient(circle at 100% 0, transparent 16px, #323639 16.500px); }
.t2 { width: 476px; padding-left: 20px; }
.t3 { width: 478px; padding-left: 22px; }
.t2, .t3 { background: linear-gradient(#5b5d60, #5b5d60) right 1px center / 2px 40px no-repeat; }
.t3 .title { width: 354px; -webkit-mask: none; }
.newtab { width: 24px; height: 24px; margin: 22px 0 0 32px; }
.toolbar { height: 74px; flex: none; display: flex; align-items: center; background: #323639; border-bottom: 2px solid #26282a; padding-left: 30px; }
.tb { width: 28px; height: 28px; margin-right: 36px; }
.omnibox { height: 56px; width: 2989px; margin-left: -4px; border-radius: 28px; background: #282c2f; display: flex; align-items: center; padding-left: 25px; }
.padlock { width: 18px; height: 22px; margin-right: 24px; }
.url { color: #9aa0a6; letter-spacing: -0.031em; padding-top: 2px; }
.url b { font-weight: 400; color: #e8eaed; }
.bm { width: 32px; height: 32px; margin-left: auto; margin-right: 19px; }
.profile { width: 40px; height: 40px; margin-left: 25px; border-radius: 50%; background: #5d4037; color: #fff; font-size: 21px; display: flex; align-items: center; justify-content: center; }
.dots { width: 6px; height: 26px; margin-left: 41px; }
.viewport { flex: 1; display: flex; background: #fff; min-height: 0; position: relative; }
.viewport::after { content: ""; position: absolute; left: 0; right: 0; bottom: 0; height: 60px; background: linear-gradient(90deg, transparent 3%, rgba(0,0,0,.075) 8%, rgba(0,0,0,.065) 92%, transparent 98%); -webkit-mask: linear-gradient(transparent, #000); }
.page { width: 3331px; display: flex; flex-direction: column; }
.scroll { flex: 1; background: #fafafa; border-left: 2px solid #e8e8e8; padding: 6px 5px 0 6px; }
.scroll i { display: block; height: 1616px; border-radius: 8px; background: #c1c1c1; }

/* GitLab navbar */
.navbar { height: 80px; flex: none; background: #292961; color: #d1d1f0; display: flex; align-items: center; padding-left: 32px; }
.logo { width: 48px; height: 48px; margin-right: 18px; }
.brand { font-size: 38px; color: #fff; width: 161px; letter-spacing: -0.05em; padding-top: 2px; }
.nv { display: flex; align-items: center; font-size: 24px; font-weight: 500; justify-content: space-between; margin-right: 40px; letter-spacing: -0.027em; }
.nv svg, .nc { width: 28px; height: 28px; margin-right: -5px; }
.nv svg { margin-top: 3px; }
.n1 { width: 120px; margin-right: 42px; } .n2 { width: 110px; margin-right: 42px; } .n3 { width: 86px; }
.navright { margin-left: auto; display: flex; align-items: center; margin-right: 50px; }
.np { width: 24px; height: 24px; margin-right: 9px; }
.nc { margin-right: 1px; }
.search { width: 640px; height: 64px; margin: 0 34px 0 32px; border-radius: 8px; background: #4b4a7c; display: flex; align-items: center; justify-content: space-between; padding: 4px 18px 0; color: #b9b9da; }
.search svg { width: 28px; height: 28px; margin-top: -4px; }
.ni { width: 32px; height: 32px; }
.i1 { margin: 0 45px 0 3px; } .i2 { margin-right: 48px; } .i3 { margin-right: 39px; } .i4 { margin-right: 5px; }
.nava { width: 46px; height: 46px; border-radius: 50%; border: 2px solid #d5d5ea; margin-left: 38px; margin-right: 3px; }

/* Sidebar */
.body { flex: 1; display: flex; min-height: 0; border-top: 2px solid #e5e5e5; }
.sidebar { width: 440px; flex: none; display: flex; flex-direction: column; background: #fafafa; border-right: 2px solid #e1e1e1; color: #707070; }
.ctx { height: 118px; display: flex; align-items: center; padding-left: 22px; flex: none; }
.ctx b { font-weight: 600; color: #2e2e2e; letter-spacing: -0.035em; padding-top: 4px; }
.av { width: 76px; height: 76px; margin-right: 18px; border-radius: 5px; background: #fbe9e7; color: #555; font-weight: 600; font-size: 30px; display: flex; align-items: center; justify-content: center; }
.group { background: #efefef; border-left: 8px solid #4b4ba3; padding-bottom: 17px; flex: none; margin-right: -2px; border-right: 2px solid #dadada; }
.item { height: 90px; flex: none; display: flex; align-items: center; padding-left: 32px; }
.item span { padding-top: 3px; }
.item svg { width: 32px; height: 32px; margin-right: 16px; }
.item em { margin: 0 32px 0 auto; width: 34px; height: 40px; border-radius: 17px; background: #e5e5e5; font-style: normal; font-size: 24px; display: flex; align-items: center; justify-content: center; }
.item.on { padding-left: 24px; color: #393982; font-weight: 600; letter-spacing: -0.032em; }
.item.on span, .sub { padding-top: 4px; }
.sub { height: 74px; padding-left: 72px; display: flex; align-items: center; }
.sub.on { background: #e5e5e5; color: #393982; font-weight: 600; }
.fold { height: 97px; margin-top: auto; border-top: 2px solid #e5e5e5; padding-top: 1px; }

/* Project content */
.content { width: 1916px; margin-left: 488px; display: flex; flex-direction: column; white-space: nowrap; }
.crumbs { height: 94px; flex: none; border-bottom: 2px solid #e5e5e5; display: flex; align-items: center; font-size: 24px; letter-spacing: -0.028em; color: #707070; padding-top: 1px; }
.crumbs b { font-weight: 600; color: #2e2e2e; }
.crumbs svg { width: 8px; height: 12px; margin-right: 18px; }
.c1 { width: 175px; } .c2 { width: 101px; }
.project { height: 160px; padding-top: 32px; flex: none; display: flex; }
.pav { width: 128px; height: 128px; border-radius: 14px; border: 2px solid #f3efef; background: #fbe9e7; color: #555; font-size: 54px; display: flex; align-items: center; justify-content: center; margin-right: 31px; }
.ptext h1 { font-size: 40px; font-weight: 650; display: flex; align-items: center; gap: 18px; margin-top: 15px; line-height: 50px; letter-spacing: -0.003em; }
.ptext h1 svg { width: 28px; height: 28px; color: #707070; margin-top: 4px; }
.ptext p { color: #707070; line-height: 44px; margin-top: 4px; letter-spacing: -0.031em; }
.pbtns { margin-left: auto; margin-top: 32px; display: flex; gap: 16px; }
.btn { height: 70px; border: 2px solid #e5e5e5; border-radius: 6px; display: flex; align-items: center; justify-content: center; background: #fff; color: #2e2e2e; flex: none; }
.btn svg { color: #666; }
.btn svg.lt { color: #808080; }
.sm { height: 48px; font-size: 26px; border-radius: 8px; letter-spacing: -0.03em; padding-top: 1px; }
.s28 { width: 28px; height: 28px; margin-right: 12px; }
.s24 { width: 24px; height: 24px; margin-right: 12px; }
.cv { width: 27px; height: 27px; margin-left: 3px; }
.w112 { width: 112px; } .w130 { width: 130px; } .w136 { width: 136px; } .w110 { width: 110px; } .w132 { width: 132px; } .w182 { width: 182px; } .w148 { width: 148px; } .w122 { width: 122px; }
.h68 { height: 68px; }
.pair { display: flex; }
.pair .btn { border-radius: 8px 0 0 8px; }
.pair .s28 { margin-right: 11px; }
.count { width: 66px; height: 48px; border: 2px solid #e5e5e5; border-left: 0; border-radius: 0 8px 8px 0; background: #fafafa; font-size: 26px; display: flex; align-items: center; justify-content: center; }
.btn.blue { width: 150px; background: #1f78d1; border-color: #1b69b6; color: #fff; font-weight: 500; }
.btn.blue svg { color: #fff; margin-left: 9px; }
.stats { height: 96px; flex: none; display: flex; align-items: center; color: #000; padding-top: 1px; letter-spacing: -0.03em; }
.stats span { display: flex; align-items: center; gap: 8px; }
.stats b { font-weight: 650; color: #2e2e2e; letter-spacing: -0.022em; }
.stats svg { width: 32px; height: 32px; color: #666; }
.s1 { width: 189px; } .s2 { width: 163px; } .s3 { width: 140px; }
.tree { height: 70px; margin-top: 55px; flex: none; display: flex; align-items: flex-start; }
.tree .btn + .btn { margin-left: 16px; }
.stats + .tree { margin-top: 56px; }
.select { width: 320px; justify-content: space-between; padding: 4px 11px 0 20px; }
.select svg { width: 33px; height: 33px; color: #bababa; }
.path { width: 125px; margin-left: 29px; line-height: 70px; letter-spacing: -0.03em; }
.slash { width: 22px; line-height: 70px; color: #919191; }
.tree .btn.push { margin-left: auto; }
.commit { height: 152px; margin-top: 32px; flex: none; border: 2px solid #e5e5e5; border-radius: 6px; background: #fafafa; display: flex; padding: 32px 32px 0 31px; }
.cav { width: 82px; height: 82px; border: 2px solid #e0e0e0; border-radius: 50%; margin-right: 14px; }
.ctext { line-height: 42px; padding-top: 1px; }
.ctext b { font-weight: 600; letter-spacing: -0.033em; }
.ctext p { letter-spacing: -0.037em; }
.ctext i { font-style: normal; color: #919191; }
.sha { margin-left: auto; height: 70px; width: 252px; border: 2px solid #e5e5e5; border-radius: 6px; display: flex; overflow: hidden; }
.sha code { width: 177px; text-align: center; line-height: 66px; letter-spacing: 0; font-family: "DejaVu Sans Mono", "Liberation Mono", monospace; font-size: 28px; border-right: 2px solid #e5e5e5; }
.cp { flex: 1; background: #fff; display: flex; align-items: center; justify-content: center; }
.cp svg { width: 32px; height: 32px; color: #666; }
.quick { display: flex; flex-wrap: wrap; gap: 16px; margin-top: 32px; flex: none; }
.qb { height: 68px; display: flex; align-items: center; padding-left: 22px; padding-top: 2px; border: 2px dashed #b5b5b5; border-radius: 6px; color: #707070; }
.qb svg { width: 28px; height: 28px; margin-right: 10px; }
.qb svg.lk { width: 28px; height: 34px; }
.solid { border: 2px solid #e5e5e5; color: #2e2e2e; }
.q1 { letter-spacing: -0.034em; width: 192px; } .q2 { width: 248px; } .q3 { width: 308px; } .q4 { width: 340px; } .q5 { width: 334px; } .q6 { width: 372px; } .q7 { width: 242px; } .q8 { width: 326px; }
.files { margin-top: 32px; flex: none; border: 2px solid #e5e5e5; border-radius: 6px; overflow: hidden; }
.row { display: grid; grid-template-columns: 642px 1fr auto; height: 84px; align-items: center; padding: 3px 32px 0 31px; border-top: 2px solid #e5e5e5; color: #707070; }
.row.head { border: 0; background: #fafafa; color: #2e2e2e; padding-top: 5px; letter-spacing: -0.032em; }
.row span:first-child { color: #2e2e2e; display: flex; align-items: center; }
.row span:last-child { letter-spacing: -0.034em; }
.fi { width: 24px; height: 28px; margin: -1px 14px 0 6px; }
.fo { width: 28px; height: 24px; margin: -4px 11px 0 4px; }
.row:last-child { height: 86px; }
.readme { margin-top: 32px; height: 288px; flex: none; border: 2px solid #e5e5e5; border-top: 0; border-radius: 6px; }
.rhead { height: 84px; background: #fafafa; border-bottom: 2px solid #e5e5e5; display: flex; align-items: center; padding: 2px 0 0 31px; }
.rhead b { font-weight: 650; letter-spacing: -0.021em; }
.readme h2 { margin: 64px 64px 0 63px; height: 74px; font-size: 48px; font-weight: 650; line-height: 62px; letter-spacing: -0.015em; border-bottom: 2px solid #e5e5e5; }

/* Dock */
.dockrow { flex: 1; padding: 4px 111px 0 110px; }
.dock { height: 160px; border: 2px solid #39414e; border-radius: 12px; background: linear-gradient(#161b29, #162230); display: flex; padding-left: 7.500px; }
.app { width: 130.600px; height: 152px; overflow: visible; margin-top: -2px; }
.sep { width: 60px; height: 114px; margin-top: 18px; flex: none; background: linear-gradient(#4a5260, #4a5260) center / 2px 100% no-repeat; }
.petals { isolation: isolate; }
.petals rect { mix-blend-mode: multiply; }
text { font-family: Inter, "Liberation Sans", sans-serif; text-anchor: middle; letter-spacing: 0; }
.cal1 { font-size: 19px; fill: #fff; }
.cal2 { font-size: 58px; font-weight: 300; fill: #222; }
.map { font-size: 16px; fill: #222; }
.bdg { font-size: 25px; fill: #fff; }
.shell { font-size: 16px; fill: #6b6b6b; }
.term { font-family: "DejaVu Sans Mono", monospace; font-weight: 700; font-size: 25px; fill: #fff; text-anchor: start; }
```
